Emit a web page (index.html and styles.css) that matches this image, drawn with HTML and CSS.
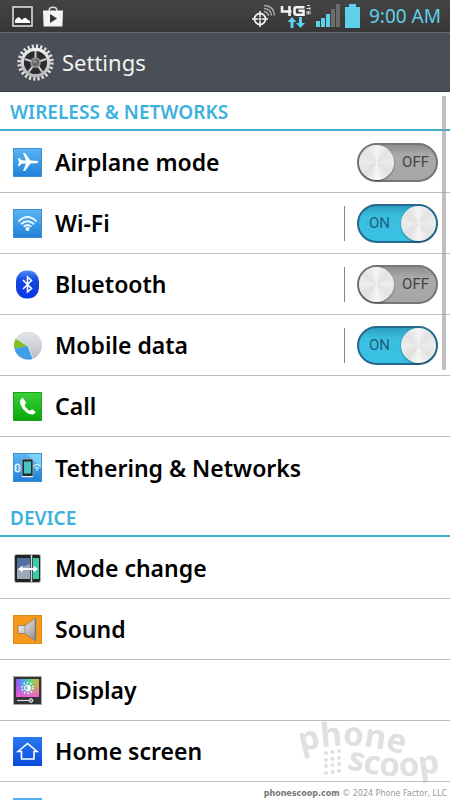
FILE: index.html
```
<!DOCTYPE html>
<html lang="en">
<head>
    <meta charset="UTF-8">
    <meta name="viewport" content="width=device-width, initial-scale=1.0">
    <title>Settings</title>
    <link rel="stylesheet" href="styles.css">
</head>
<body>
    <!-- Status bar -->
    <div class="status-bar">
        <div class="status-left">
            <svg width="21" height="21" viewBox="0 0 21 21">
                <rect x="1" y="1" width="19" height="19" fill="#333" stroke="#ddd" stroke-width="1.6"/>
                <path d="M3 17v-3l2-2 2-1 3 3 2-2 2 0 2 2 2 1v2z" fill="#fff"/>
            </svg>
            <svg width="20" height="21" viewBox="0 0 20 21">
                <path d="M6 5c0-5 8-5 8 0" fill="none" stroke="#ddd" stroke-width="1.4"/>
                <path d="M0 4.500h20l-.6 16H.6z" fill="#f4f4f4"/>
                <path d="M7 8v9l7-4.500z" fill="#333"/>
            </svg>
        </div>
        <div class="status-right">
            <svg width="25" height="28" viewBox="0 0 25 28">
                <g fill="none" stroke="#eee">
                    <circle cx="9" cy="17" r="5.500" stroke-width="1.8"/>
                    <path d="M9 9v6M9 19v6M1 17h6M11 17h6" stroke-width="1.6"/>
                    <path d="M13 9.500q4 .5 4.500 4.500M13 6.500q7 .5 7.500 7M13 3.500q10 .5 10.500 10" stroke="#aaa" stroke-width="1.5"/>
                </g>
                <circle cx="9" cy="17" r="1.500" fill="#eee"/>
            </svg>
            <svg width="32" height="28" viewBox="0 0 32 28">
                <g fill="none" stroke="#f4f4f4" stroke-width="2.6">
                    <path d="M2 4v5.500h9.500M9.500 4v10"/>
                    <path d="M24.500 5.300h-8q-2 0-2 2v3.400q0 2 2 2h7v-4h-5"/>
                </g>
                <g fill="none" stroke="#ddd" stroke-width="1">
                    <path d="M30 3.500h-3M30 5v3M30 6.500h-3.500M30 9v3.500M28.500 9v3.500M27 9v3.500"/>
                </g>
                <path d="M12 15l4.500 5h-3v6h-3v-6h-3z" fill="#5fd0ec"/>
                <path d="M20.500 26l4.500-5h-3v-6h-3v6h-3z" fill="#5fd0ec"/>
            </svg>
            <svg width="25" height="24" viewBox="0 0 25 24">
                <path d="M0 17h4v6H0zM5 14h4v9H5zM10 10h4v13h-4z" fill="#5fd0ec"/>
                <path d="M15 5h4v18h-4zM20 0h4v23h-4z" fill="#6b6b6b"/>
            </svg>
            <svg width="15" height="24" viewBox="0 0 15 24">
                <path d="M4 0h7v3h4v21H0V3h4z" fill="#5fd0ec"/>
            </svg>
            <span class="clock">9:00 AM</span>
        </div>
    </div>

    <header>
        <svg width="37" height="37" viewBox="0 0 37 37">
            <defs>
                <linearGradient id="metal" x1="0" y1="0" x2="0" y2="1">
                    <stop offset="0" stop-color="#f0f0f0"/>
                    <stop offset="1" stop-color="#b5b5b5"/>
                </linearGradient>
            </defs>
            <circle cx="18.500" cy="18.500" r="14" fill="#2b2c2e"/>
            <circle cx="18.500" cy="18.500" r="16.200" fill="none" stroke="#e0e0e0" stroke-width="4" stroke-dasharray="2.120 2.120"/>
            <circle cx="18.500" cy="18.500" r="13.200" fill="none" stroke="url(#metal)" stroke-width="3.200"/>
            <path d="M18.500 18.500V7M18.500 18.500L7.600 15M18.500 18.500L29.400 15M18.500 18.500L11.700 27.800M18.500 18.500L25.300 27.800" stroke="#ccc" stroke-width="2"/>
            <circle cx="18.500" cy="18.500" r="4.500" fill="#666" stroke="#999" stroke-width="1.500"/>
            <circle cx="17.500" cy="17.500" r="2" fill="#888"/>
        </svg>
        <h1>Settings</h1>
    </header>

    <main>
        <div class="scrollbar"></div>

        <h2>WIRELESS &amp; NETWORKS</h2>
        <ul class="settings-list">
            <li>
                <svg class="icon" viewBox="0 0 29 29">
                    <defs>
                        <linearGradient id="blue" x1="0" y1="0" x2="0" y2="1">
                            <stop offset="0" stop-color="#5bb6f3"/>
                            <stop offset="1" stop-color="#1f80d8"/>
                        </linearGradient>
                    </defs>
                    <rect x=".5" y=".5" width="28" height="28" fill="url(#blue)" stroke="#3d8fce"/>
                    <path d="M25 14q0-1.200-2-1.300l-5.500-.2L12 5h-2l3 7.500-4.500-.2L6.500 10H5l1 4-1 4h1.500l2-2.300 4.500-.2L10 23h2l5.500-7.500 5.500-.2q2-.1 2-1.300z" fill="#fff"/>
                </svg>
                <a href="#airplane">Airplane mode</a>
                <label class="switch">
                    <input type="checkbox" aria-label="Airplane mode">
                    <span class="switch-text">OFF</span>
                </label>
            </li>
            <li>
                <svg class="icon" viewBox="0 0 29 29">
                    <rect x=".5" y=".5" width="28" height="28" fill="url(#blue)" stroke="#3d8fce"/>
                    <g fill="none" stroke="#e6f8ff" stroke-width="2">
                        <path d="M5.500 12.500q9-9 18 0M8 15.300q6.500-6 13 0M10.700 17.800q3.800-3.300 7.600 0"/>
                    </g>
                    <circle cx="14.500" cy="20" r="2" fill="#fff"/>
                </svg>
                <a href="#wifi">Wi-Fi</a>
                <label class="switch divided">
                    <input type="checkbox" aria-label="Wi-Fi" checked>
                    <span class="switch-text">ON</span>
                </label>
            </li>
            <li>
                <svg class="icon" viewBox="0 0 29 29">
                    <defs>
                        <linearGradient id="bt" x1="0" y1="0" x2="0" y2="1">
                            <stop offset="0" stop-color="#4b8bf5"/>
                            <stop offset=".35" stop-color="#1247dc"/>
                            <stop offset="1" stop-color="#0a36e8"/>
                        </linearGradient>
                    </defs>
                    <rect x="3" y=".5" width="23" height="28" rx="10.500" ry="11" fill="url(#bt)"/>
                    <path d="M10 10l8.500 8.500-4 3.500V7l4 3.500L10 19" fill="none" stroke="#fff" stroke-width="1.600"/>
                </svg>
                <a href="#bluetooth">Bluetooth</a>
                <label class="switch divided">
                    <input type="checkbox" aria-label="Bluetooth">
                    <span class="switch-text">OFF</span>
                </label>
            </li>
            <li>
                <svg class="icon" viewBox="0 0 29 29">
                    <defs>
                        <linearGradient id="pie" x1="0" y1="0" x2="0" y2="1">
                            <stop offset="0" stop-color="#e3e6e9"/>
                            <stop offset="1" stop-color="#b9bec4"/>
                        </linearGradient>
                    </defs>
                    <circle cx="15" cy="14.500" r="14" fill="url(#pie)"/>
                    <path d="M15 15L3 7.500Q0 12 1.500 17.500z" fill="#7bc024"/>
                    <path d="M15 15L1.500 17.500A14 14 0 0 0 20 27.700z" fill="#3f9fe6"/>
                    <path d="M3 7.500L15 15l5 12.700" fill="none" stroke="#eef2f4" stroke-width=".8"/>
                </svg>
                <a href="#data">Mobile data</a>
                <label class="switch divided">
                    <input type="checkbox" aria-label="Mobile data" checked>
                    <span class="switch-text">ON</span>
                </label>
            </li>
            <li>
                <svg class="icon" viewBox="0 0 29 29">
                    <defs>
                        <linearGradient id="green" x1="0" y1="0" x2="0" y2="1">
                            <stop offset="0" stop-color="#3bd03a"/>
                            <stop offset="1" stop-color="#07a80a"/>
                        </linearGradient>
                    </defs>
                    <rect x=".5" y=".5" width="28" height="28" fill="url(#green)" stroke="#1fa31f"/>
                    <path d="M8.500 6.500q-2.500 2-1 6 2 5 6 8 4.500 3.200 7.500 1.500 2-1.200 1.500-2.200l-3-2.300q-1-.5-2 1-1 .6-3.200-1.500-3-3-2.600-4.200 1.700-1.300 1.200-2.200L10.500 6.500q-.8-1-2 0z" fill="#fff"/>
                </svg>
                <a href="#call">Call</a>
            </li>
            <li>
                <svg class="icon" viewBox="0 0 29 29">
                    <rect x=".5" y=".5" width="28" height="28" fill="url(#blue)" stroke="#3d8fce"/>
                    <path d="M14 1h14v14z" fill="#8be0f8" opacity=".7"/>
                    <rect x="1.500" y="10.500" width="6" height="9" rx="3" fill="#d8f2ff"/>
                    <path d="M3 13l3 3.500-1.500 1.500v-6L6 13.500 3 17" fill="none" stroke="#2d8ddd" stroke-width=".8"/>
                    <path d="M20.500 13.500q3.500-4 7 0M22 15.500q2-2 4 0" fill="none" stroke="#c5f0ff" stroke-width="1.300"/>
                    <circle cx="24" cy="17" r="1" fill="#c5f0ff"/>
                    <rect x="9" y="6" width="11" height="18" rx="1" fill="#252b31" stroke="#aeb8c0" stroke-width=".8"/>
                    <rect x="11" y="8.500" width="7" height="12" fill="#45c4c8"/>
                    <path d="M9 23.500h11" stroke="#eee"/>
                </svg>
                <a href="#tethering">Tethering &amp; Networks</a>
            </li>
        </ul>

        <h2>DEVICE</h2>
        <ul class="settings-list">
            <li>
                <svg class="icon" viewBox="0 0 29 29">
                    <rect x="1.500" y=".5" width="26" height="28" rx="2" fill="#222" stroke="#b5b5b5"/>
                    <rect x="4" y="4" width="13" height="21" fill="#4f6f9e"/>
                    <path d="M4 15l13-5v15H4z" fill="#9aa9bb"/>
                    <rect x="20" y="4" width="6" height="21" fill="#37cda9"/>
                    <path d="M18.500 1v27" stroke="#d5d5d5" stroke-width="1.500"/>
                    <path d="M5 15l4.500-3.500v2.500h11v-2.500L25 15l-4.500 3.500V16h-11v2.500z" fill="#fff"/>
                </svg>
                <a href="#mode">Mode change</a>
            </li>
            <li>
                <svg class="icon" viewBox="0 0 29 29">
                    <defs>
                        <linearGradient id="cone" x1="0" y1="0" x2="1" y2="1">
                            <stop offset="0" stop-color="#fff"/>
                            <stop offset="1" stop-color="#8d8d8d"/>
                        </linearGradient>
                    </defs>
                    <rect x=".5" y=".5" width="28" height="28" fill="#f7991c" stroke="#e08a18"/>
                    <path d="M5 10.500h7L22.500 3v23L12 18.500H5z" fill="url(#cone)" stroke="#9a7440" stroke-width=".8"/>
                    <path d="M12 10.500v8" stroke="#999"/>
                    <path d="M22.500 3.500v22" stroke="#777" stroke-width="1.500"/>
                </svg>
                <a href="#sound">Sound</a>
            </li>
            <li>
                <svg class="icon" viewBox="0 0 29 29">
                    <defs>
                        <linearGradient id="rainbow" x1="0" y1="0" x2="1" y2="0">
                            <stop offset="0" stop-color="#a14df0"/>
                            <stop offset=".3" stop-color="#4ba4f5"/>
                            <stop offset=".65" stop-color="#58dd77"/>
                            <stop offset="1" stop-color="#f0a23c"/>
                        </linearGradient>
                        <linearGradient id="pink" x1="0" y1="0" x2="0" y2="1">
                            <stop offset=".3" stop-color="#f45ad0" stop-opacity="0"/>
                            <stop offset="1" stop-color="#f45ad0"/>
                        </linearGradient>
                    </defs>
                    <rect x=".5" y=".5" width="28" height="28" fill="#333" stroke="#aaa"/>
                    <rect x="3" y="3" width="23" height="18" fill="url(#rainbow)"/>
                    <rect x="3" y="3" width="23" height="18" fill="url(#pink)"/>
                    <circle cx="14.500" cy="12" r="5.500" fill="none" stroke="#fff" stroke-width="1.500" stroke-dasharray="1.500 2"/>
                    <circle cx="14.500" cy="12" r="3" fill="#8bc" stroke="#fff"/>
                    <path d="M14.500 9a3 3 0 0 1 0 6z" fill="#fff"/>
                    <path d="M4 24.500h12" stroke="#ddd" stroke-width="1.200"/>
                    <circle cx="18" cy="24.500" r="1.800" fill="#777" stroke="#fff"/>
                </svg>
                <a href="#display">Display</a>
            </li>
            <li>
                <svg class="icon" viewBox="0 0 29 29">
                    <defs>
                        <linearGradient id="deep" x1="0" y1="0" x2="0" y2="1">
                            <stop offset="0" stop-color="#2a7af0"/>
                            <stop offset="1" stop-color="#0a49dc"/>
                        </linearGradient>
                    </defs>
                    <rect width="29" height="29" fill="url(#deep)"/>
                    <path d="M5 14.500l9.500-8 9.500 8h-3V22H8.500v-7.500z" fill="none" stroke="#fff" stroke-width="1.600"/>
                </svg>
                <a href="#home">Home screen</a>
            </li>
            <li>
                <svg class="icon" viewBox="0 0 29 29">
                    <rect width="29" height="29" fill="#4fb0f0"/>
                </svg>
            </li>
        </ul>
    </main>

    <!-- Watermark -->
    <div class="watermark">
        <svg width="190" height="87" viewBox="0 0 190 87">
            <path id="arc-up" d="M41 52Q90 37 152 57" fill="none"/>
            <path id="arc-down" d="M86 68Q134 84 194 69" fill="none"/>
            <g class="watermark-logo">
                <text><textPath href="#arc-up">phone</textPath></text>
                <text><textPath href="#arc-down">scoop</textPath></text>
                <circle cx="66" cy="53" r="2"/><circle cx="72.500" cy="52" r="2"/><circle cx="79" cy="51" r="2"/>
                <circle cx="66" cy="60" r="2"/><circle cx="72.500" cy="59" r="2"/><circle cx="79" cy="58" r="2"/>
                <circle cx="66" cy="66" r="2"/><circle cx="72.500" cy="65" r="2"/><circle cx="79" cy="64" r="2"/>
                <circle cx="66" cy="73" r="2"/><circle cx="72.500" cy="72" r="2"/><circle cx="79" cy="71" r="2"/>
            </g>
        </svg>
        <p><b>phonescoop.com</b> <span>© 2024 Phone Factor, LLC</span></p>
    </div>
</body>
</html>
```
FILE: styles.css
```
* {
    margin: 0;
    padding: 0;
    box-sizing: border-box;
}

body {
    display: flex;
    flex-direction: column;
    height: 100vh;
    overflow: hidden;
    font-family: "Noto Sans", sans-serif;
    background-color: #fff;
    color: #000;
}

/* Status bar */
.status-bar {
    display: flex;
    justify-content: space-between;
    align-items: center;
    flex: none;
    height: 32px;
    padding: 0 9px 0 12px;
    background: linear-gradient(#444, #373737);
}

.status-left,
.status-right {
    display: flex;
    align-items: center;
}

.status-left {
    gap: 10px;
}

.status-right {
    gap: 4px;
}

.clock {
    margin-left: 5px;
    font-size: 19px;
    color: #5fd0ec;
}

/* Title bar */
header {
    display: flex;
    align-items: center;
    gap: 8px;
    flex: none;
    height: 60px;
    padding: 0 17px;
    background-color: #4a4e57;
    border-top: 1px solid #66696f;
    border-bottom: 1px solid #3c3f46;
}

header h1 {
    font-size: 22px;
    font-weight: 400;
    color: #f2f2f2;
}

/* Settings */
main {
    position: relative;
    flex: 1;
    min-height: 0;
    overflow: hidden;
}

.scrollbar {
    position: absolute;
    top: 4px;
    right: 4px;
    z-index: 1;
    width: 4px;
    height: 274px;
    background-color: rgba(150, 150, 150, 0.6);
}

main h2 {
    height: 39px;
    padding-left: 10px;
    border-bottom: 2px solid #41afcb;
    font-size: 19px;
    font-weight: 600;
    line-height: 40px;
    color: #3cb1dd;
}

.settings-list {
    padding-top: 1px;
    list-style: none;
}

.settings-list li {
    display: flex;
    align-items: center;
    height: 61px;
    padding: 0 12px 0 13px;
    border-bottom: 1px solid #bdbdbd;
}

.settings-list li:last-child {
    border-bottom: none;
}

.settings-list a {
    flex: 1;
    color: #000;
    font-size: 23px;
    font-weight: 600;
    text-decoration: none;
}

.icon {
    flex: none;
    width: 29px;
    height: 29px;
    margin-right: 13px;
}

/* ON / OFF switches */
.switch {
    display: grid;
    align-items: center;
    cursor: pointer;
}

.switch.divided {
    padding-left: 13px;
    background: linear-gradient(#888, #888) left center / 1px 35px no-repeat;
}

.switch input,
.switch-text {
    grid-area: 1 / 1;
}

.switch input {
    appearance: none;
    display: flex;
    width: 81px;
    height: 39px;
    border: 2px solid #74777d;
    border-radius: 20px;
    background: linear-gradient(#8f8f8f, #aaa 30%, #a6a6a6);
}

.switch input::before {
    content: "";
    width: 35px;
    height: 35px;
    border-radius: 50%;
    background: conic-gradient(#f4f4f4, #e2e2e2 12%, #ececec 25%, #e2e2e2 37%, #f6f6f6 50%, #e0e0e0 62%, #ececec 75%, #e2e2e2 87%, #f4f4f4);
    box-shadow: 0 1px 2px rgba(0, 0, 0, 0.4);
}

.switch input:checked {
    justify-content: flex-end;
    border-color: #266a90;
    background: linear-gradient(#2c9fc0, #3bbfdf 30%, #38c0e4);
}

.switch-text {
    z-index: 1;
    justify-self: end;
    margin-right: 9px;
    font-family: Roboto, sans-serif;
    font-size: 15px;
    color: #444;
}

.switch input:checked + .switch-text {
    justify-self: start;
    margin-left: 12px;
    color: #1c5f80;
}

/* Watermark */
.watermark {
    position: absolute;
    right: 0;
    bottom: 0;
    pointer-events: none;
}

.watermark svg {
    display: block;
}

.watermark-logo {
    fill: #b4b4b4;
    fill-opacity: 0.42;
    font-size: 33px;
    font-weight: 700;
}

.watermark p {
    padding-right: 3px;
    font-family: "DejaVu Sans", sans-serif;
    font-size: 8px;
    line-height: 13px;
    text-align: right;
    color: #999;
}

.watermark b {
    color: #777;
}
```
